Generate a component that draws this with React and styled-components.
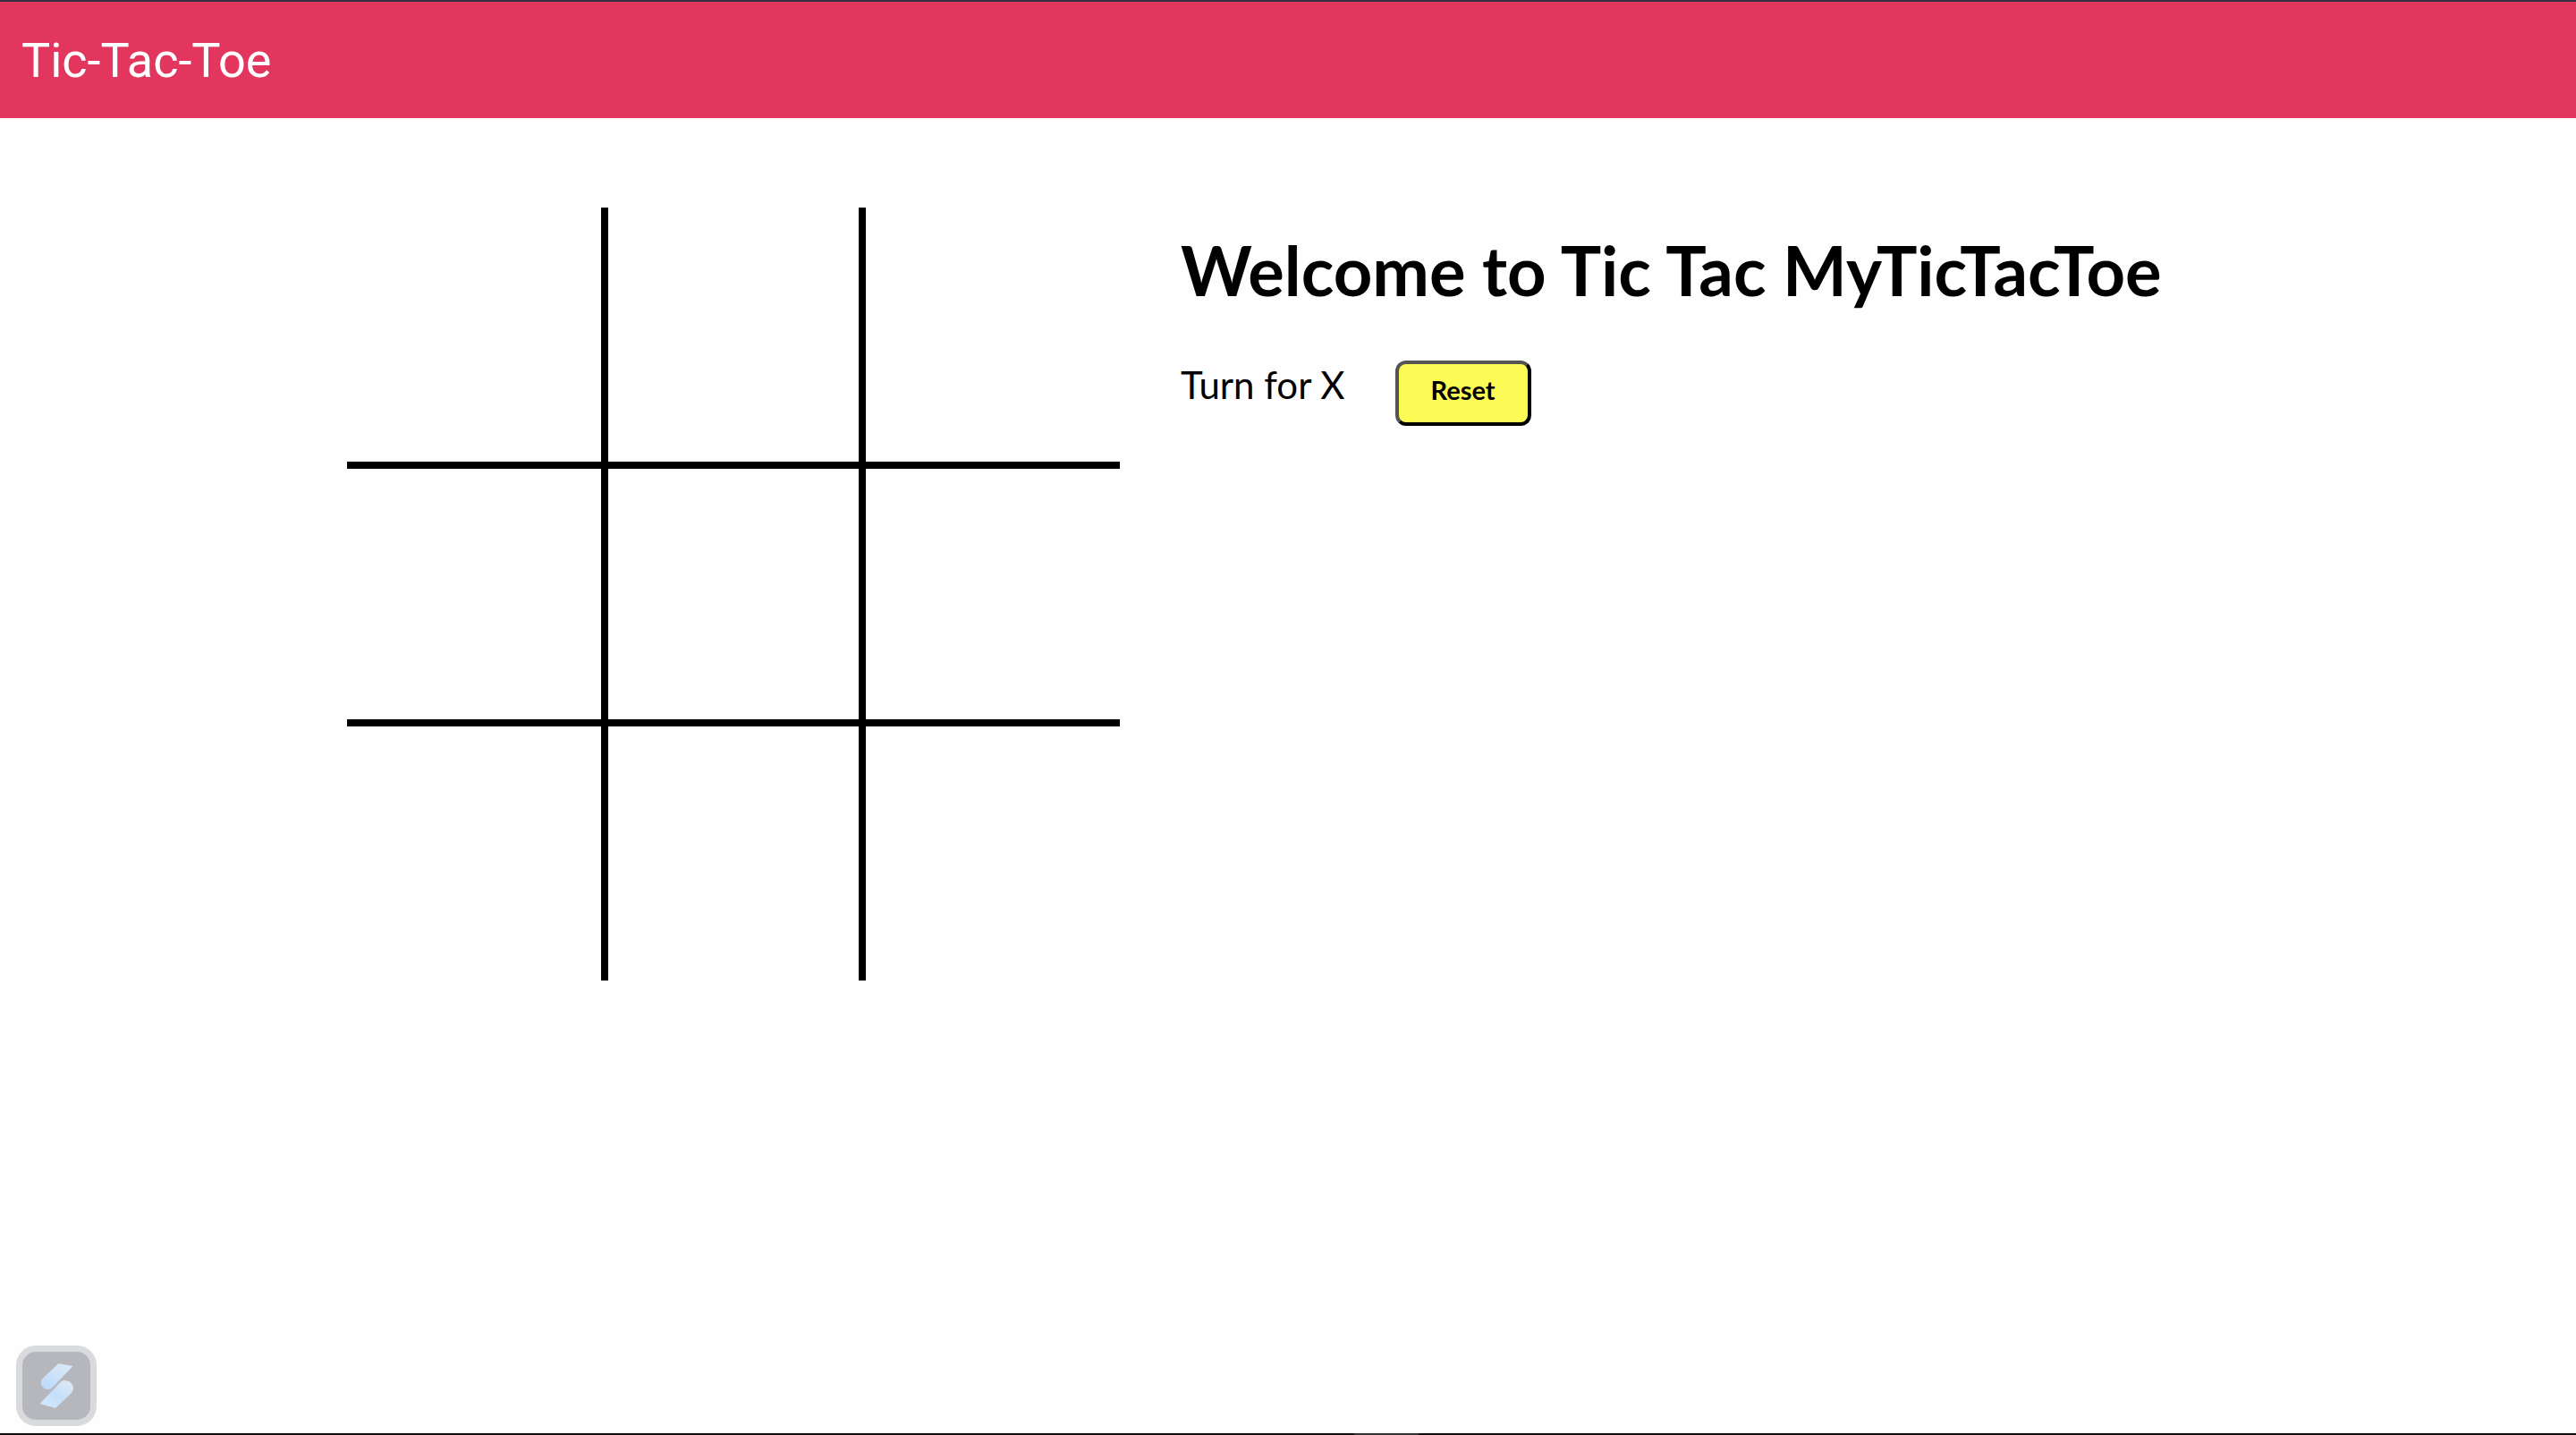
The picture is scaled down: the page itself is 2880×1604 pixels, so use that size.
import React, { useState } from "react";
import styled, { createGlobalStyle } from "styled-components";

const GlobalStyle = createGlobalStyle`
  *, *::before, *::after { box-sizing: border-box; }
  body {
    margin: 0;
    background: #fefefe;
    color: #000;
    font-family: Lato, "Open Sans", sans-serif;
  }
`;

const Page = styled.div`
  display: flex;
  flex-direction: column;
  min-height: 100vh;
`;

const Header = styled.header`
  display: flex;
  align-items: center;
  height: 132px;
  padding: 2px 24px 0;
  border-top: 2px solid #382c42;
  background: #e3365f;
`;

const Brand = styled.span`
  color: #fff;
  font-family: Roboto, sans-serif;
  font-size: 54px;
  line-height: 64px;
`;

const Main = styled.main`
  display: flex;
  flex: 1;
  align-items: flex-start;
  gap: 68px;
  width: 100%;
  max-width: 2104px;
  margin: 0 auto;
  padding-top: 100px;
`;

const Board = styled.div`
  display: grid;
  grid-template-columns: repeat(3, 288px);
  grid-auto-rows: 288px;
`;

const Cell = styled.button`
  padding: 0;
  border: 0 solid #000;
  border-left-width: ${(p) => (p.$col > 0 ? 4 : 0)}px;
  border-right-width: ${(p) => (p.$col < 2 ? 4 : 0)}px;
  border-top-width: ${(p) => (p.$row > 0 ? 4 : 0)}px;
  border-bottom-width: ${(p) => (p.$row < 2 ? 4 : 0)}px;
  background: transparent;
  color: #000;
  font: inherit;
  font-size: 144px;
`;

const Info = styled.section`
  flex: 1;
  padding-top: 22px;
`;

const Title = styled.h1`
  margin: 0;
  font-size: 76px;
  font-weight: 700;
  line-height: 96px;
  white-space: nowrap;
`;

const Controls = styled.div`
  display: flex;
  align-items: flex-start;
  gap: 56px;
  margin-top: 53px;
`;

const Turn = styled.p`
  margin: 0;
  padding-top: 3px;
  font-size: 42px;
  line-height: 48px;
`;

const ResetButton = styled.button`
  height: 73px;
  padding: 0 36px 8px;
  border: 4px outset #000;
  border-radius: 12px;
  background: #fcfb55;
  color: #000;
  font: inherit;
  font-size: 29px;
  font-weight: 700;
`;

const Footer = styled.footer`
  display: flex;
  height: 2px;
  padding-left: calc(50% + 74px);
  background: #100c0d;
`;

const Handle = styled.div`
  width: 72px;
  background: #343132;
`;

const Badge = styled.button`
  position: fixed;
  bottom: 10px;
  left: 18px;
  display: grid;
  place-items: center;
  width: 90px;
  height: 90px;
  padding: 0;
  border: 7px solid #d9dade;
  border-radius: 22px;
  background: #b6b7bc;
`;

function BadgeLogo() {
  return (
    <svg width="76" height="76" viewBox="25 1511 76 76" aria-hidden="true">
      <defs>
        <linearGradient id="top" x1="0" y1="1" x2="1" y2="0">
          <stop offset="0" stopColor="#bbd9fa" />
          <stop offset="1" stopColor="#dcebf8" />
        </linearGradient>
        <linearGradient id="low" x1="0" y1="1" x2="1" y2="0">
          <stop offset="0" stopColor="#d6e9fc" />
          <stop offset="0.5" stopColor="#c5dffb" />
          <stop offset="1" stopColor="#e0ebf6" />
        </linearGradient>
      </defs>
      <path d="M65.500 1524 L81.500 1527 L59 1550.500 Q56 1553.500 52.500 1553 Q46 1551.500 45.700 1545 Q45.700 1543 48 1540.500 Z" fill="url(#top)" />
      <path d="M44.500 1569 L68 1544.500 Q70.500 1542.500 74 1543.300 Q81 1545 82 1551 Q82 1555 79 1558 L62 1574 Z" fill="url(#low)" />
    </svg>
  );
}

const emptyBoard = Array(9).fill("");

export default function App() {
  const [cells, setCells] = useState(emptyBoard);
  const turn = cells.filter(Boolean).length % 2 === 0 ? "X" : "O";

  const play = (index) => {
    if (!cells[index]) {
      setCells(cells.map((value, i) => (i === index ? turn : value)));
    }
  };

  return (
    <Page>
      <GlobalStyle />
      <Header>
        <Brand>Tic-Tac-Toe</Brand>
      </Header>
      <Main>
        <Board>
          {cells.map((value, i) => (
            <Cell
              key={i}
              type="button"
              $row={Math.floor(i / 3)}
              $col={i % 3}
              aria-label={`Cell ${i + 1}`}
              onClick={() => play(i)}
            >
              {value}
            </Cell>
          ))}
        </Board>
        <Info>
          <Title>Welcome to Tic Tac MyTicTacToe</Title>
          <Controls>
            <Turn>Turn for {turn}</Turn>
            <ResetButton type="button" onClick={() => setCells(emptyBoard)}>
              Reset
            </ResetButton>
          </Controls>
        </Info>
      </Main>
      <Footer>
        <Handle />
      </Footer>
      <Badge type="button" aria-label="Open tools">
        <BadgeLogo />
      </Badge>
    </Page>
  );
}
